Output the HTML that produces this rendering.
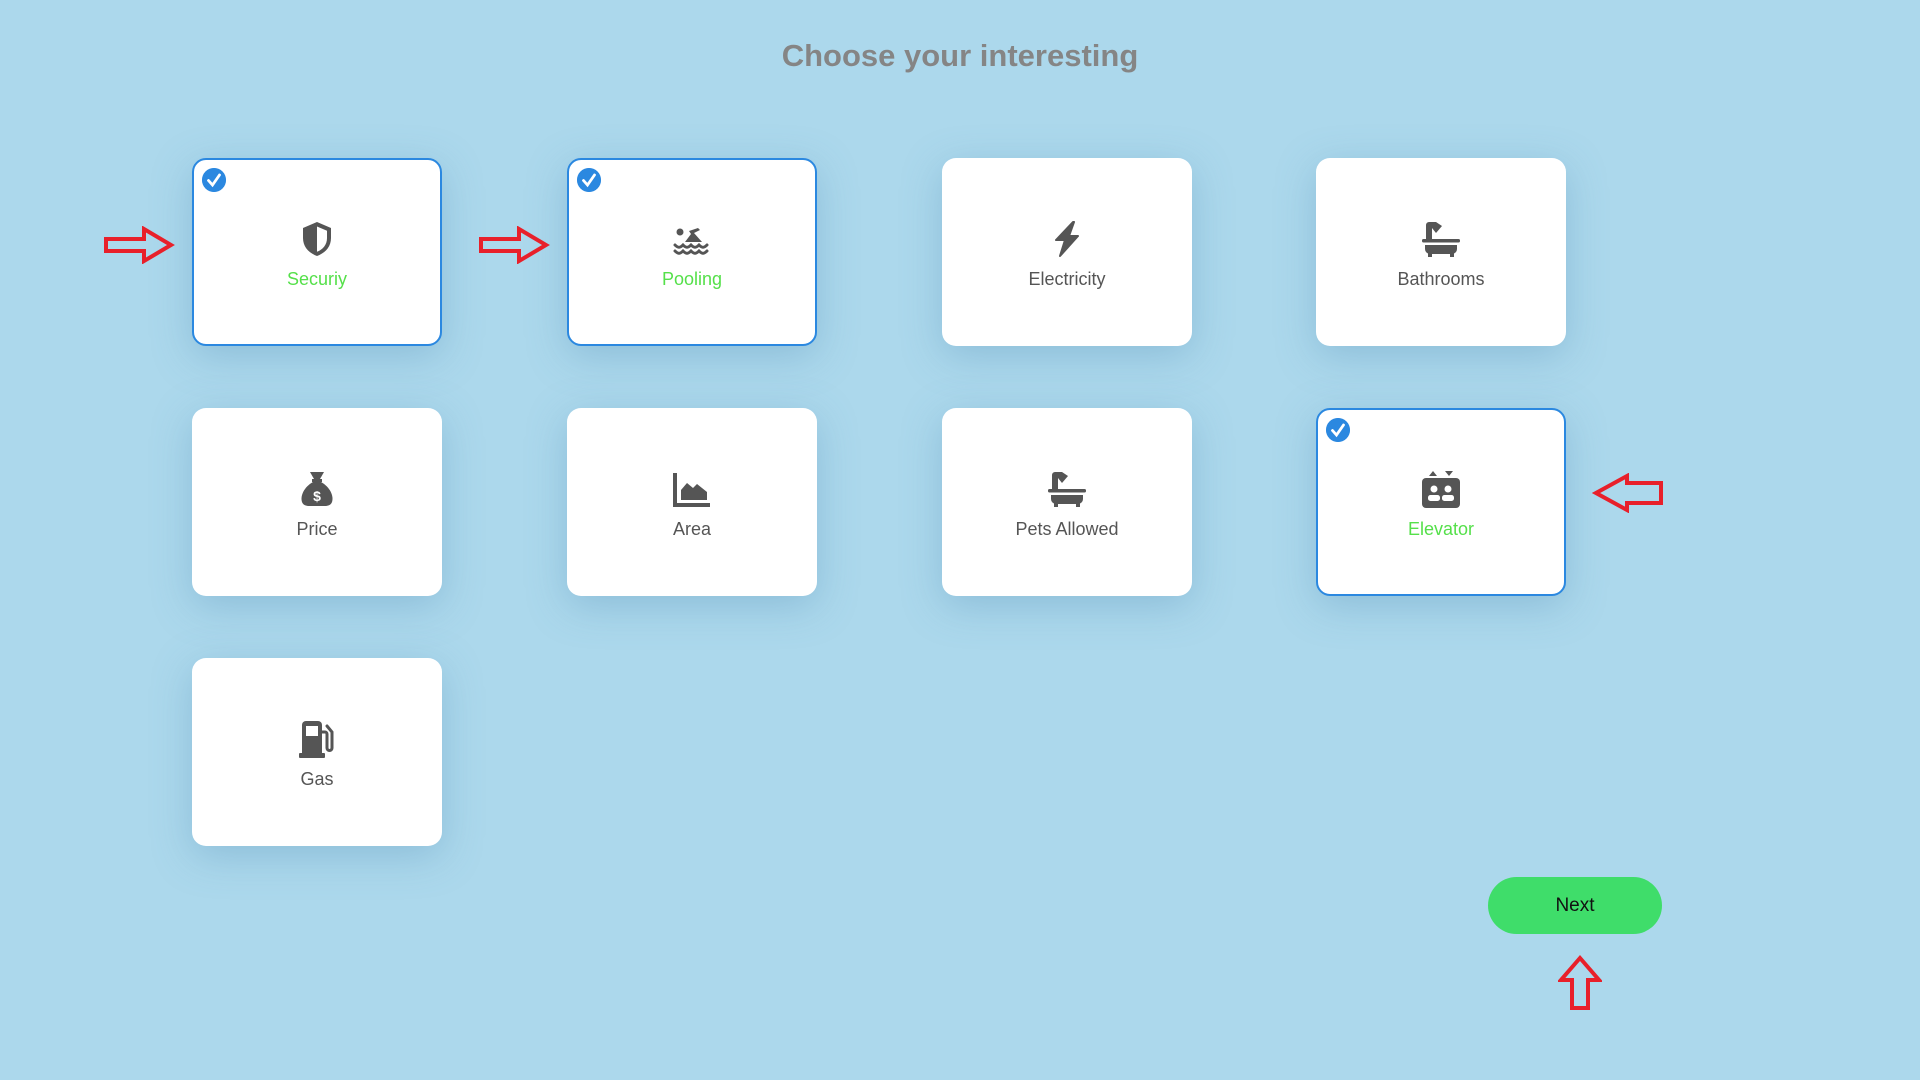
<!DOCTYPE html>
<html><head><meta charset="utf-8"><style>
html,body{margin:0;padding:0;}
body{width:1920px;height:1080px;background:#acd8ec;font-family:"Liberation Sans",Arial,sans-serif;position:relative;overflow:hidden;}
h1{position:absolute;top:38px;left:0;width:1920px;text-align:center;margin:0;font-size:31px;font-weight:bold;color:#858585;}
.card{position:absolute;width:250px;height:188px;background:#fff;border-radius:14px;box-shadow:0 10px 40px rgba(80,140,180,0.35);box-sizing:border-box;}
.card.sel{border:2px solid #2b88e0;}
.card svg.ic{position:absolute;left:106px;top:62px;width:38px;height:38px;}
.card.sel svg.ic{left:104px;top:60px;}
.card .lb{position:absolute;left:0;width:100%;top:111px;text-align:center;font-size:18px;color:#555;}
.card.sel .lb{top:109px;color:#55e04a;}
.chk{position:absolute;left:8px;top:8px;width:24px;height:24px;border-radius:50%;background:#2b88e0;}
.next{position:absolute;left:1488px;top:877px;width:174px;height:57px;border-radius:29px;background:#3fdd6a;color:#111;font-size:19px;text-align:center;line-height:57px;}
.arr{position:absolute;}
</style></head><body>
<h1>Choose your interesting</h1>

<div class="card sel" style="left:192px;top:158px">
<svg class="chk" viewBox="0 0 24 24"><circle cx="12" cy="12" r="12" fill="#2b88e0"/><path d="M6.5 12.5l4 4.5 7-10" fill="none" stroke="#fff" stroke-width="2.8" stroke-linecap="round"/></svg>
<svg class="ic" viewBox="0 0 38 38"><path d="M19 2L5 8v10c0 9 6 15 14 18 8-3 14-9 14-18V8z" fill="#555"/><path d="M19 6.5l10 4.3V18c0 6.8-4.2 11.5-10 13.8z" fill="#fff"/></svg>
<div class="lb">Securiy</div></div>

<div class="card sel" style="left:567px;top:158px">
<svg class="chk" viewBox="0 0 24 24"><circle cx="12" cy="12" r="12" fill="#2b88e0"/><path d="M6.5 12.5l4 4.5 7-10" fill="none" stroke="#fff" stroke-width="2.8" stroke-linecap="round"/></svg>
<svg class="ic" viewBox="0 0 38 38"><circle cx="7" cy="12" r="3.5" fill="#555"/><path d="M12 22l6-8-2-3 9-3 2 2-6 3 8 9z" fill="#555"/><path d="M2 25c3 3 5 3 8 0 3 3 5 3 8 0 3 3 5 3 8 0 3 3 5 3 8 0M2 31c3 3 5 3 8 0 3 3 5 3 8 0 3 3 5 3 8 0 3 3 5 3 8 0" fill="none" stroke="#555" stroke-width="3" stroke-linecap="round"/></svg>
<div class="lb">Pooling</div></div>

<div class="card" style="left:942px;top:158px">
<svg class="ic" viewBox="0 0 38 38"><path d="M25 2L8 20h9l-5 16 18-20h-9l5-14z" fill="#555" stroke="#555" stroke-width="2" stroke-linejoin="round"/></svg>
<div class="lb">Electricity</div></div>

<div class="card" style="left:1316px;top:158px">
<svg class="ic" viewBox="0 0 38 38"><path d="M4 20V5a3 3 0 0 1 3-3h7l6 4-6 7-4-5v12z" fill="#555"/><rect x="0" y="19" width="38" height="3.5" rx="1.5" fill="#555"/><path d="M3 25h32v4a5 5 0 0 1-5 5H8a5 5 0 0 1-5-5z" fill="#555"/><rect x="6" y="33" width="4" height="4" fill="#555"/><rect x="28" y="33" width="4" height="4" fill="#555"/></svg>
<div class="lb">Bathrooms</div></div>

<div class="card" style="left:192px;top:408px">
<svg class="ic" viewBox="0 0 38 38"><path d="M12 2h14l-4 7h-6z" fill="#555"/><rect x="14" y="9" width="10" height="3" fill="#555"/><path d="M15 12C6 17 2 26 4 32c1 3 4 4 7 4h16c3 0 6-1 7-4 2-6-2-15-11-20z" fill="#555"/><text x="19" y="31" font-size="14" font-weight="bold" fill="#fff" text-anchor="middle" font-family="Liberation Sans,sans-serif">$</text></svg>
<div class="lb">Price</div></div>

<div class="card" style="left:567px;top:408px">
<svg class="ic" viewBox="0 0 38 38"><path d="M2 3v32h35" fill="none" stroke="#555" stroke-width="4"/><path d="M8 30V20l6-7 6 5 4-4 10 8v8z" fill="#555"/></svg>
<div class="lb">Area</div></div>

<div class="card" style="left:942px;top:408px">
<svg class="ic" viewBox="0 0 38 38"><path d="M4 20V5a3 3 0 0 1 3-3h7l6 4-6 7-4-5v12z" fill="#555"/><rect x="0" y="19" width="38" height="3.5" rx="1.5" fill="#555"/><path d="M3 25h32v4a5 5 0 0 1-5 5H8a5 5 0 0 1-5-5z" fill="#555"/><rect x="6" y="33" width="4" height="4" fill="#555"/><rect x="28" y="33" width="4" height="4" fill="#555"/></svg>
<div class="lb">Pets Allowed</div></div>

<div class="card sel" style="left:1316px;top:408px">
<svg class="chk" viewBox="0 0 24 24"><circle cx="12" cy="12" r="12" fill="#2b88e0"/><path d="M6.5 12.5l4 4.5 7-10" fill="none" stroke="#fff" stroke-width="2.8" stroke-linecap="round"/></svg>
<svg class="ic" viewBox="0 0 38 38"><path d="M7 6l4-5 4 5zM23 1h8l-4 5z" fill="#555"/><rect x="0" y="8" width="38" height="30" rx="4" fill="#555"/><circle cx="12" cy="19" r="3.5" fill="#fff"/><circle cx="26" cy="19" r="3.5" fill="#fff"/><rect x="6" y="25" width="12" height="6" rx="2.5" fill="#fff"/><rect x="20" y="25" width="12" height="6" rx="2.5" fill="#fff"/></svg>
<div class="lb">Elevator</div></div>

<div class="card" style="left:192px;top:658px">
<svg class="ic" viewBox="0 0 38 38"><path d="M4 34V5a4 4 0 0 1 4-4h12a4 4 0 0 1 4 4v29z" fill="#555"/><rect x="8" y="6" width="12" height="10" fill="#fff"/><rect x="1" y="33" width="26" height="5" rx="1" fill="#555"/><path d="M24 12h3a2 2 0 0 1 2 2v14a2.5 2.5 0 0 0 5 0V12l-5-6" fill="none" stroke="#555" stroke-width="3" stroke-linecap="round"/></svg>
<div class="lb">Gas</div></div>

<div class="next">Next</div>

<svg class="arr" style="left:103px;top:226px" width="72" height="38" viewBox="0 0 72 38"><path d="M3 13h38V3l27 16-27 16V25H3z" fill="none" stroke="#e8202a" stroke-width="4"/></svg>
<svg class="arr" style="left:478px;top:226px" width="72" height="38" viewBox="0 0 72 38"><path d="M3 13h38V3l27 16-27 16V25H3z" fill="none" stroke="#e8202a" stroke-width="4"/></svg>
<svg class="arr" style="left:1592px;top:473px" width="72" height="40" viewBox="0 0 72 40"><path d="M69 10H35V3L4 20l31 17v-7h34z" fill="none" stroke="#e8202a" stroke-width="4"/></svg>
<svg class="arr" style="left:1558px;top:954px" width="44" height="56" viewBox="0 0 44 56"><path d="M14 54V26H3L22 4l19 22H30v28z" fill="none" stroke="#e8202a" stroke-width="4"/></svg>
</body></html>
